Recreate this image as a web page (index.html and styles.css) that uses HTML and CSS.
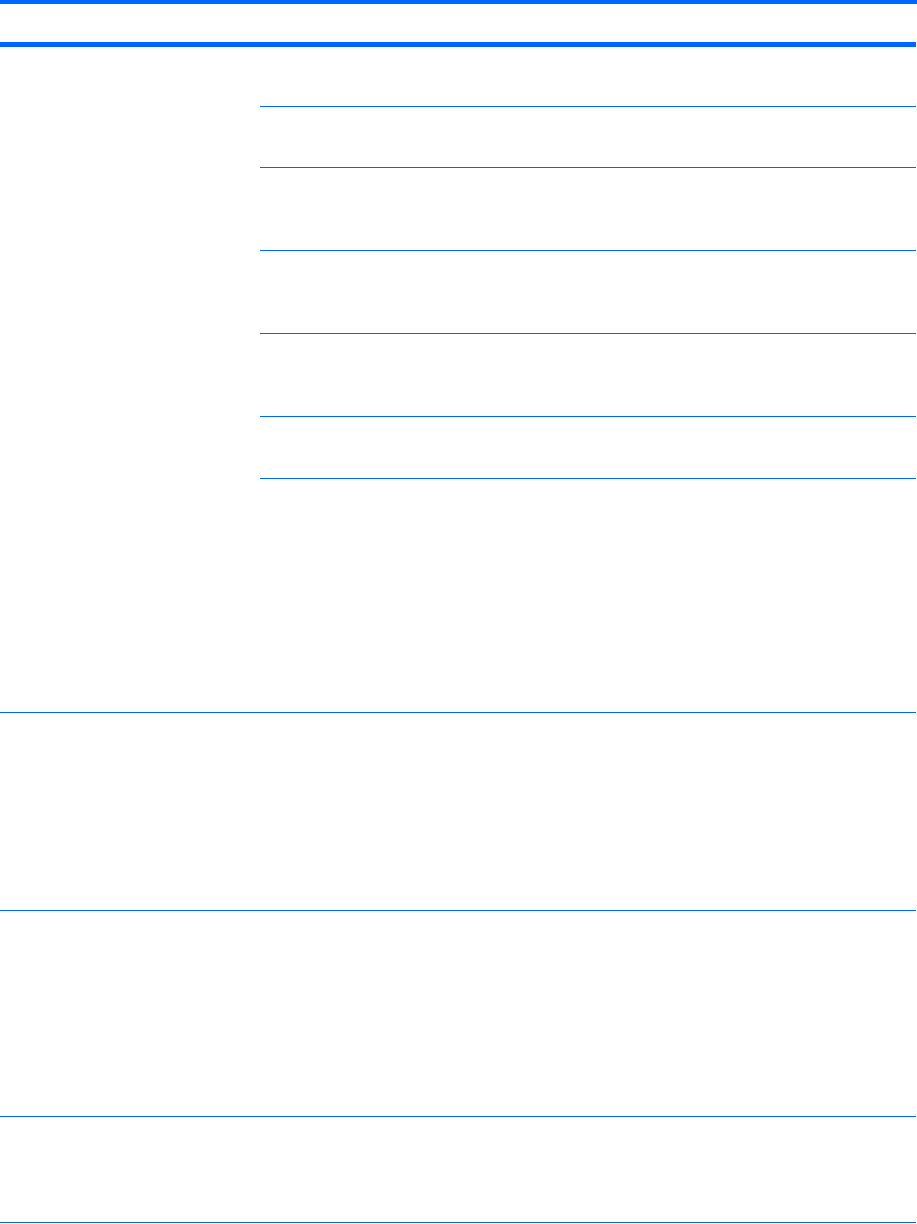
FILE: index.html
```html
<!doctype html>
<html lang="en">
<head>
  <meta charset="utf-8">
  <title>Table</title>
  <link rel="stylesheet" href="styles.css">
</head>
<body>
  <div class="top-rule"></div>

  <div class="sheet">
    <div class="head"></div>

    <div class="group">
      <div class="label"></div>
      <div class="items">
        <div class="item h59"></div>
        <div class="item h60"></div>
        <div class="item h82"></div>
        <div class="item h82"></div>
        <div class="item h82"></div>
        <div class="item h61"></div>
        <div class="item last h233"></div>
      </div>
    </div>

    <div class="group">
      <div class="label h197"></div>
      <div class="items"></div>
    </div>

    <div class="group">
      <div class="label h205"></div>
      <div class="items"></div>
    </div>

    <div class="group end">
      <div class="label h105"></div>
      <div class="items"></div>
    </div>
  </div>
</body>
</html>
```

FILE: styles.css
```css
body {
  margin: 0;
  font-family: "Liberation Sans", Arial, sans-serif;
  background: #fff;
}
.top-rule {
  height: 4px;
  background: #0066ff;
}
.sheet {
  width: 916px;
}
.head {
  height: 38px;
  border-bottom: 5px solid #0066ff;
}
.group {
  display: grid;
  grid-template-columns: 260px 1fr;
  border-bottom: 1px solid #0066ff;
}
.group.end {
  border-bottom-color: #155fd6;
}
.items {
  display: flex;
  flex-direction: column;
}
.item {
  border-bottom: 1px solid #0066ff;
}
.item.last {
  border-bottom: none;
}
.h59 { height: 59px; }
.h60 { height: 60px; }
.h61 { height: 61px; }
.h82 { height: 82px; }
.h105 { height: 105px; }
.h197 { height: 197px; }
.h205 { height: 205px; }
.h233 { height: 233px; }
```
